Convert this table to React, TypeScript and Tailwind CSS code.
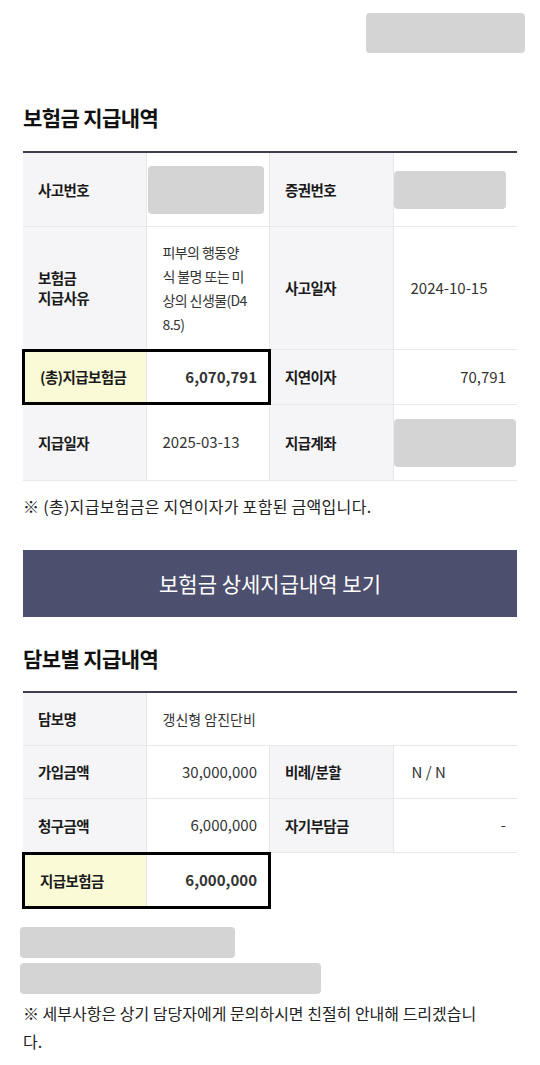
import React from 'react';

const font = { fontFamily: '"Noto Sans CJK KR", "Noto Sans", sans-serif' };

// label cell (gray), value cell (white)
function Label({ children, yellow = false }: { children: React.ReactNode; yellow?: boolean }) {
  return (
    <div
      className={`flex items-center pl-[15px] text-[14.5px] font-bold tracking-[-0.6px] leading-[20px] text-[#1a1a1a] border-r border-[#e8e8e8] ${
        yellow ? 'bg-[#fafad7]' : 'bg-[#f5f5f7]'
      }`}
    >
      {children}
    </div>
  );
}

function Value({
  children,
  right = false,
  bold = false,
}: {
  children?: React.ReactNode;
  right?: boolean;
  bold?: boolean;
}) {
  return (
    <div
      className={`flex items-center bg-white text-[15px] text-[#333] border-r border-[#e8e8e8] ${
        right ? 'justify-end pr-[12px]' : 'pl-[16px]'
      } ${bold ? 'font-bold text-[#111]' : ''}`}
    >
      {children}
    </div>
  );
}

function Blur({ w, h }: { w: string; h: string }) {
  return <div className={`${w} ${h} rounded-[4px] bg-[#d4d4d4]`} />;
}

export default function App() {
  return (
    <div className="w-[540px] min-h-[1065px] bg-white px-[23px] pt-[13px] pb-[20px] flex flex-col" style={font}>
      {/* top placeholder */}
      <div className="flex justify-end mr-[-8px]">
        <Blur w="w-[159px]" h="h-[40px]" />
      </div>

      <h2 className="mt-[50px] text-[21px] leading-[28px] font-bold tracking-[-0.6px] text-[#111]">보험금 지급내역</h2>

      {/* 보험금 지급내역 table */}
      <div className="mt-[20px] border-t-2 border-[#3c3e4f]">
        <div className="grid grid-cols-4 h-[74px] border-b border-[#e8e8e8]">
          <Label>사고번호</Label>
          <div className="flex items-center bg-white border-r border-[#e8e8e8] pl-[1px]">
            <Blur w="w-[116px]" h="h-[48px]" />
          </div>
          <Label>증권번호</Label>
          <div className="flex items-center bg-white">
            <Blur w="w-[112px]" h="h-[38px]" />
          </div>
        </div>

        <div className="grid grid-cols-4 h-[123px] border-b border-[#e8e8e8]">
          <Label>
            보험금
            <br />
            지급사유
          </Label>
          <div className="flex items-center bg-white border-r border-[#e8e8e8] pl-[16px] text-[14px] leading-[24px] tracking-[-0.6px] text-[#333] whitespace-nowrap">
            <div>
              피부의 행동양
              <br />
              식 불명 또는 미
              <br />
              상의 신생물(D4
              <br />
              8.5)
            </div>
          </div>
          <Label>사고일자</Label>
          <div className="flex items-center bg-white pl-[17px] text-[15px] text-[#333]">2024-10-15</div>
        </div>

        <div className="grid grid-cols-4 h-[55px] border-b border-[#e8e8e8]">
          <div className="col-span-2 grid grid-cols-2 outline-[3px] outline-solid outline-black -outline-offset-[2px] relative z-10">
            <Label yellow>
              <span className="pl-[2px]">(총)지급보험금</span>
            </Label>
            <Value right bold>
              6,070,791
            </Value>
          </div>
          <Label>지연이자</Label>
          <div className="flex items-center justify-end pr-[11px] bg-white text-[15px] text-[#333]">70,791</div>
        </div>

        <div className="grid grid-cols-4 h-[76px] border-b border-[#e8e8e8]">
          <Label>지급일자</Label>
          <Value>2025-03-13</Value>
          <Label>지급계좌</Label>
          <div className="flex items-center bg-white">
            <Blur w="w-[122px]" h="h-[48px]" />
          </div>
        </div>
      </div>

      <p className="mt-[13px] text-[16px] leading-[24px] tracking-[0.3px] text-[#222]">※ (총)지급보험금은 지연이자가 포함된 금액입니다.</p>

      <button className="mt-[32px] h-[67px] w-full bg-[#4d4f6e] text-white text-[21px] flex items-center justify-center">
        보험금 상세지급내역 보기
      </button>

      <h2 className="mt-[27px] text-[21px] leading-[28px] font-bold tracking-[-0.6px] text-[#111]">담보별 지급내역</h2>

      {/* 담보별 지급내역 table */}
      <div className="mt-[19px] border-t-2 border-[#3c3e4f]">
        <div className="grid grid-cols-4 h-[53px] border-b border-[#e8e8e8]">
          <Label>담보명</Label>
          <div className="col-span-3 flex items-center bg-white pl-[16px] text-[14px] text-[#333]">갱신형 암진단비</div>
        </div>

        <div className="grid grid-cols-4 h-[53px] border-b border-[#e8e8e8]">
          <Label>가입금액</Label>
          <Value right>30,000,000</Value>
          <Label>비례/분할</Label>
          <div className="flex items-center bg-white pl-[18px] text-[15px] text-[#333]">N / N</div>
        </div>

        <div className="grid grid-cols-4 h-[54px] border-b border-[#e8e8e8]">
          <Label>청구금액</Label>
          <Value right>6,000,000</Value>
          <Label>자기부담금</Label>
          <div className="flex items-center justify-end pr-[11px] bg-white text-[15px] text-[#333]">-</div>
        </div>

        <div className="grid grid-cols-4 h-[55px]">
          <div className="col-span-2 grid grid-cols-2 outline-[3px] outline-solid outline-black -outline-offset-[2px] relative z-10">
            <Label yellow>
              <span className="pl-[2px]">지급보험금</span>
            </Label>
            <Value right bold>
              6,000,000
            </Value>
          </div>
        </div>
      </div>

      {/* bottom placeholders */}
      <div className="mt-[19px] ml-[-3px] flex flex-col gap-[5px]">
        <Blur w="w-[215px]" h="h-[31px]" />
        <Blur w="w-[301px]" h="h-[31px]" />
      </div>

      <p className="mt-[5px] text-[16px] leading-[28px] text-[#222]">
        ※ 세부사항은 상기 담당자에게 문의하시면 친절히 안내해 드리겠습니
        <br />
        다.
      </p>
    </div>
  );
}
